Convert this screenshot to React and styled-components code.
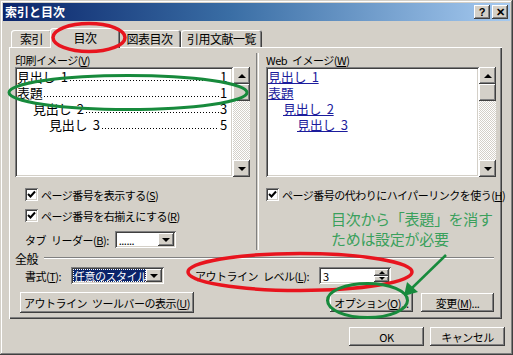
import React from "react";
import styled, { createGlobalStyle } from "styled-components";

const GlobalStyle = createGlobalStyle`
  html, body { margin: 0; padding: 0; background: #d4d0c8; }
  body {
    font-family: "Noto Sans CJK JP", "Noto Sans", sans-serif;
    font-size: 11px;
    letter-spacing: -0.5px;
    word-spacing: 3px;
    color: #000;
  }
`;

const raised = `inset -1px -1px #404040, inset 1px 1px #fff, inset -2px -2px #808080, inset 2px 2px #d4d0c8`;
const sunken = `inset 1px 1px #808080, inset -1px -1px #fff, inset 2px 2px #404040, inset -2px -2px #d4d0c8`;

const Win = styled.div`
  position: relative;
  width: 513px;
  height: 355px;
  box-sizing: border-box;
  padding: 3px;
  background: #d4d0c8;
  box-shadow: inset -1px -1px #404040, inset 1px 1px #d4d0c8, inset -2px -2px #808080, inset 2px 2px #fff;
  overflow: hidden;
  display: flex;
  flex-direction: column;
`;

const TitleBar = styled.div`
  height: 18px;
  display: flex;
  align-items: center;
  padding: 0 2px 0 2px;
  background: linear-gradient(to right, #0a246a 0%, #3a6ea5 45%, #a6caf0 100%);
  color: #fff;
  font-weight: bold;
  font-size: 12px;
  letter-spacing: 0;
`;

const TitleText = styled.span`
  flex: 1;
  line-height: 18px;
`;

const CapButton = styled.div`
  width: 16px;
  height: 14px;
  margin-left: 2px;
  background: #d4d0c8;
  box-shadow: ${raised};
  color: #000;
  display: flex;
  align-items: center;
  justify-content: center;
  font-family: "Liberation Sans", sans-serif;
  font-weight: bold;
  font-size: 11px;
  line-height: 1;
`;

const TabStrip = styled.div`
  display: flex;
  align-items: flex-end;
  height: 20px;
  margin-top: 6px;
  padding-left: 8px;
  position: relative;
  z-index: 2;
  font-size: 12px;
`;

const Tab = styled.div`
  box-sizing: border-box;
  width: ${(p) => p.w}px;
  height: ${(p) => (p.active ? 20 : 17)}px;
  margin-bottom: ${(p) => (p.active ? -1 : 0)}px;
  margin-left: ${(p) => (p.active ? -2 : 0)}px;
  margin-right: ${(p) => (p.active ? -2 : 0)}px;
  background: #d4d0c8;
  border-radius: 3px 3px 0 0;
  box-shadow: inset 1px 1px #fff, inset -1px 0 #404040, inset -2px 0 #808080;
  display: flex;
  align-items: center;
  justify-content: center;
  padding-bottom: ${(p) => (p.active ? 2 : 0)}px;
  position: relative;
  z-index: ${(p) => (p.active ? 2 : 1)};
`;

const Panel = styled.div`
  box-sizing: border-box;
  width: 493px;
  height: 272px;
  margin-left: 6px;
  padding: 6px 6px 0 6px;
  box-shadow: inset 1px 1px #fff, inset -1px -1px #404040, inset -2px -2px #808080;
  display: flex;
  flex-direction: column;
`;

const Columns = styled.div`
  display: flex;
  height: 197px;
`;

const Column = styled.div`
  width: ${(p) => p.w}px;
  display: flex;
  flex-direction: column;
`;

const Separator = styled.div`
  width: 1px;
  height: 197px;
  margin: 0 7px 0 6px;
  border-left: 1px solid #808080;
  border-right: 1px solid #fff;
`;

const Label = styled.div`
  height: 14px;
  line-height: 14px;
  white-space: nowrap;
`;

const ListWrap = styled.div`
  display: flex;
  height: 110px;
`;

const ListBox = styled.div`
  flex: 1;
  box-sizing: border-box;
  background: #fff;
  box-shadow: ${sunken};
  padding: 2px 6px 2px 2px;
  font-size: 13px;
  letter-spacing: -0.3px;
  line-height: 16px;
  overflow: hidden;
`;

const TocRow = styled.div`
  display: flex;
  align-items: baseline;
  height: 16px;
  padding-left: ${(p) => p.indent}px;
`;

const Leader = styled.span`
  flex: 1;
  height: 1px;
  margin: 0 1px 4px 2px;
  background-image: linear-gradient(to right, #000 1px, transparent 1px);
  background-size: 3px 1px;
  background-repeat: repeat-x;
  align-self: flex-end;
`;

const LinkRow = styled.div`
  height: 16px;
  padding-left: ${(p) => p.indent}px;
  color: #1c1c9c;
  text-decoration: underline;
  text-underline-offset: 1px;
`;

const ScrollBar = styled.div`
  width: 17px;
  display: flex;
  flex-direction: column;
  background: repeating-conic-gradient(#fff 0 25%, #d4d0c8 0 50%) 0 0 / 2px 2px;
`;

const SBButton = styled.div`
  width: 17px;
  height: 17px;
  background: #d4d0c8;
  box-shadow: ${raised};
  display: flex;
  align-items: center;
  justify-content: center;
  margin-top: ${(p) => (p.end ? "auto" : 0)};
`;

const Tri = styled.span`
  width: 0;
  height: 0;
  border-left: 4px solid transparent;
  border-right: 4px solid transparent;
  ${(p) => (p.up ? "border-bottom: 4px solid #000;" : "border-top: 4px solid #000;")}
`;

const CheckRow = styled.div`
  display: flex;
  align-items: center;
  height: 13px;
  margin-top: ${(p) => p.mt}px;
  margin-left: ${(p) => p.ml}px;
  white-space: nowrap;
`;

const Box = styled.div`
  width: 13px;
  height: 13px;
  flex-shrink: 0;
  box-sizing: border-box;
  background: #fff;
  box-shadow: ${sunken};
  margin-right: 3px;
  display: flex;
  align-items: center;
  justify-content: center;
`;

const FieldRow = styled.div`
  display: flex;
  align-items: center;
  margin-top: ${(p) => p.mt}px;
  margin-left: ${(p) => p.ml}px;
  height: ${(p) => p.h}px;
  white-space: nowrap;
`;

const Combo = styled.div`
  box-sizing: border-box;
  width: ${(p) => p.w}px;
  height: ${(p) => p.h}px;
  margin-left: ${(p) => p.ml || 0}px;
  flex-shrink: 0;
  background: #fff;
  box-shadow: ${sunken};
  padding: 2px;
  display: flex;
  align-items: stretch;
`;

const ComboText = styled.div`
  flex: 1;
  display: flex;
  align-items: center;
  padding-left: 2px;
  overflow: hidden;
  white-space: nowrap;
  ${(p) =>
    p.selected &&
    `background: #0a246a; color: #fff; outline: 1px dotted #fff; outline-offset: -1px; padding-left: 1px;`}
`;

const DropBtn = styled.div`
  width: 16px;
  background: #d4d0c8;
  box-shadow: ${raised};
  display: flex;
  align-items: center;
  justify-content: center;
`;

const Spin = styled.div`
  width: 15px;
  display: flex;
  flex-direction: column;
`;

const SpinHalf = styled.div`
  flex: 1;
  background: #d4d0c8;
  box-shadow: ${raised};
  display: flex;
  align-items: center;
  justify-content: center;
`;

const SmallTri = styled.span`
  width: 0;
  height: 0;
  border-left: 3px solid transparent;
  border-right: 3px solid transparent;
  ${(p) => (p.up ? "border-bottom: 3px solid #000;" : "border-top: 3px solid #000;")}
`;

const InlineLabel = styled.span`
  margin-left: ${(p) => p.ml}px;
`;

const GroupHead = styled.div`
  display: flex;
  align-items: center;
  height: 14px;
  margin-top: 1px;
  font-size: 12px;
`;

const GroupLine = styled.div`
  flex: 1;
  height: 0;
  margin: 0 2px 0 6px;
  border-top: 1px solid #808080;
  border-bottom: 1px solid #fff;
`;

const Button = styled.div`
  box-sizing: border-box;
  width: ${(p) => p.w}px;
  height: ${(p) => p.h || 20}px;
  margin-left: ${(p) => p.ml || 0}px;
  flex-shrink: 0;
  background: #d4d0c8;
  box-shadow: ${raised};
  display: flex;
  align-items: center;
  justify-content: center;
  white-space: nowrap;
`;

const Footer = styled.div`
  display: flex;
  margin-top: 8px;
  padding-left: 346px;
`;

const Overlay = styled.svg`
  position: absolute;
  left: 0;
  top: 0;
  pointer-events: none;
  z-index: 5;
`;

const Note = styled.div`
  position: absolute;
  left: 331px;
  top: 209px;
  color: #3aa05c;
  font-size: 15px;
  letter-spacing: -0.3px;
  word-spacing: 0;
  line-height: 20px;
  z-index: 5;
`;

const Check = () => (
  <svg width="9" height="9" viewBox="0 0 9 9">
    <path d="M1 4 L3.5 6.5 L8 1.5" fill="none" stroke="#000" strokeWidth="2" />
  </svg>
);

const Acc = ({ k }) => (
  <>
    (<u>{k}</u>)
  </>
);

const tocRows = [
  { t: "見出し 1", n: "1", indent: 0 },
  { t: "表題", n: "1", indent: 0 },
  { t: "見出し 2", n: "3", indent: 16 },
  { t: "見出し 3", n: "5", indent: 32 },
];

const webRows = [
  { t: "見出し 1", indent: 0 },
  { t: "表題", indent: 0 },
  { t: "見出し 2", indent: 15 },
  { t: "見出し 3", indent: 29 },
];

const Scroll = () => (
  <ScrollBar>
    <SBButton>
      <Tri up />
    </SBButton>
    <SBButton />
    <SBButton end>
      <Tri />
    </SBButton>
  </ScrollBar>
);

const App = () => {
  return (
    <Win>
      <GlobalStyle />
      <TitleBar>
        <TitleText>索引と目次</TitleText>
        <CapButton>?</CapButton>
        <CapButton>✕</CapButton>
      </TitleBar>

      <TabStrip>
        <Tab w={41}>索引</Tab>
        <Tab w={70} active>
          目次
        </Tab>
        <Tab w={63}>図表目次</Tab>
        <Tab w={81}>引用文献一覧</Tab>
      </TabStrip>

      <Panel>
        <Columns>
          <Column w={236}>
            <Label>
              印刷イメージ<Acc k="V" />
            </Label>
            <ListWrap>
              <ListBox>
                {tocRows.map((r, i) => (
                  <TocRow key={i} indent={r.indent}>
                    <span>{r.t}</span>
                    <Leader />
                    <span>{r.n}</span>
                  </TocRow>
                ))}
              </ListBox>
              <Scroll />
            </ListWrap>
            <CheckRow mt={11} ml={10}>
              <Box>
                <Check />
              </Box>
              ページ番号を表示する<Acc k="S" />
            </CheckRow>
            <CheckRow mt={8} ml={10}>
              <Box>
                <Check />
              </Box>
              ページ番号を右揃えにする<Acc k="R" />
            </CheckRow>
            <FieldRow mt={9} ml={10} h={17}>
              タブ リーダー<Acc k="B" />:
              <Combo w={61} h={17} ml={6}>
                <ComboText>......</ComboText>
                <DropBtn>
                  <Tri />
                </DropBtn>
              </Combo>
            </FieldRow>
          </Column>

          <Separator />

          <Column w={230}>
            <Label>
              Web イメージ<Acc k="W" />
            </Label>
            <ListWrap>
              <ListBox>
                {webRows.map((r, i) => (
                  <LinkRow key={i} indent={r.indent}>
                    {r.t}
                  </LinkRow>
                ))}
              </ListBox>
              <Scroll />
            </ListWrap>
            <CheckRow mt={11} ml={0}>
              <Box>
                <Check />
              </Box>
              ページ番号の代わりにハイパーリンクを使う<Acc k="H" />
            </CheckRow>
          </Column>
        </Columns>

        <GroupHead>
          全般
          <GroupLine />
        </GroupHead>
        <FieldRow mt={2} ml={10} h={17}>
          書式<Acc k="T" />:
          <Combo w={93} h={17} ml={10}>
            <ComboText selected>任意のスタイル</ComboText>
            <DropBtn>
              <Tri />
            </DropBtn>
          </Combo>
          <InlineLabel ml={31}>
            アウトライン レベル<Acc k="L" />:
          </InlineLabel>
          <Combo w={72} h={17} ml={10}>
            <ComboText>3</ComboText>
            <Spin>
              <SpinHalf>
                <SmallTri up />
              </SpinHalf>
              <SpinHalf>
                <SmallTri />
              </SpinHalf>
            </Spin>
          </Combo>
        </FieldRow>
        <FieldRow mt={8} ml={5} h={21}>
          <Button w={174} h={21}>
            アウトライン ツールバーの表示<Acc k="U" />
          </Button>
          <Button w={83} h={19} ml={136}>
            オプション<Acc k="O" />...
          </Button>
          <Button w={73} h={19} ml={8}>
            変更<Acc k="M" />...
          </Button>
        </FieldRow>
      </Panel>

      <Footer>
        <Button w={75} h={19}>
          OK
        </Button>
        <Button w={75} h={19} ml={6}>
          キャンセル
        </Button>
      </Footer>

      <Note>
        目次から「表題」を消す
        <br />
        ためは設定が必要
      </Note>

      <Overlay width="513" height="355" viewBox="0 0 513 355">
        <ellipse cx="89" cy="37.5" rx="36" ry="14" fill="none" stroke="#e8141e" strokeWidth="3.5" />
        <ellipse cx="128" cy="92.5" rx="119" ry="17" fill="none" stroke="#178a3c" strokeWidth="3" />
        <ellipse cx="300" cy="272" rx="112" ry="18.5" fill="none" stroke="#e8141e" strokeWidth="3.5" />
        <ellipse cx="367.5" cy="300.5" rx="40" ry="17" fill="none" stroke="#178a3c" strokeWidth="3" />
        <line x1="446" y1="255" x2="411" y2="289" stroke="#178a3c" strokeWidth="2.5" />
        <path d="M404 296 L407 282 L418 292 Z" fill="#178a3c" />
      </Overlay>
    </Win>
  );
};

export default App;
